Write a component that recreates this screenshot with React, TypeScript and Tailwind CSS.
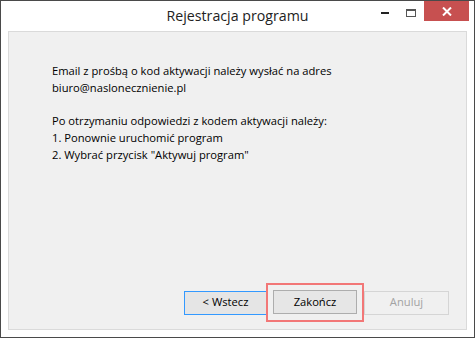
import React from "react";

export default function App() {
  const font = { fontFamily: '"Open Sans", "Noto Sans", sans-serif' };
  return (
    <div className="w-[475px] h-[338px] bg-white border border-[#4a4a4a] flex flex-col" style={font}>
      <div className="h-[30px] grid grid-cols-[1fr_auto_1fr] items-center">
        <div />
        <div className="text-[14.2px] text-[#222] leading-none">
          Rejestracja programu
        </div>
        <div className="flex justify-end items-start h-full">
          <div className="w-[26px] h-[20px] flex items-center justify-center">
            <div className="w-[8px] h-[2px] bg-[#222] mt-[4px]" />
          </div>
          <div className="w-[26px] h-[20px] flex items-center justify-center">
            <div className="w-[10px] h-[8px] border border-[#555] border-t-2 mt-[4px]" />
          </div>
          <div className="w-[45px] h-[20px] bg-[#c75050] flex items-center justify-center mr-[5px]">
            <svg width="10" height="9" viewBox="0 0 10 9">
              <path d="M1 0.5 L9 8.5 M9 0.5 L1 8.5" stroke="white" strokeWidth="2" />
            </svg>
          </div>
        </div>
      </div>
      <div className="mx-[7px] mb-[7px] flex-1 bg-[#f0f0f0] border border-[#dadada] flex flex-col">
        <div className="pl-[43px] pt-[31px] text-[11.2px] leading-[16.8px] text-black">
          <div>Email z prośbą o kod aktywacji należy wysłać na adres</div>
          <div>biuro@naslonecznienie.pl</div>
          <div className="h-[16.8px]" />
          <div>Po otrzymaniu odpowiedzi z kodem aktywacji należy:</div>
          <div>1. Ponownie uruchomić program</div>
          <div>2. Wybrać przycisk "Aktywuj program"</div>
        </div>
        <div className="flex-1" />
        <div className="flex items-center pl-[175px] pb-[7px] text-[11.2px]">
          <div className="w-[83px] h-[24px] border border-[#3399ff] bg-[#e5e5e5] flex items-center justify-center text-black">
            &lt; Wstecz
          </div>
          <div className="ml-[-1px] border-2 border-[#f27777] px-[5px] pt-[5px] pb-[6px]">
            <div className="w-[84px] h-[24px] border border-[#adadad] bg-[#e6e6e6] flex items-center justify-center text-black">
              Zakończ
            </div>
          </div>
          <div className="w-[85px] h-[24px] border border-[#d5d5d5] bg-[#f0f0f0] flex items-center justify-center text-[#a3a3a3]">
            Anuluj
          </div>
        </div>
      </div>
    </div>
  );
}
